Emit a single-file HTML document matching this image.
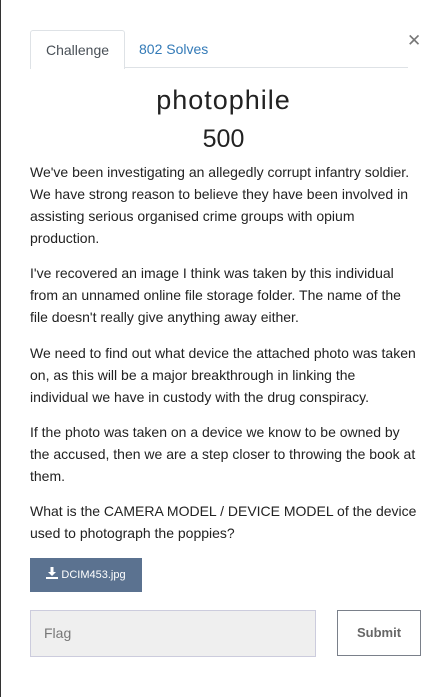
<!DOCTYPE html>
<html><head><style>
body{margin:0;width:447px;height:697px;background:#fff;position:relative;overflow:hidden;font-family:"Liberation Sans",sans-serif;color:#222}
.edge{position:absolute;left:0;top:0;width:1px;height:697px;background:#333}
.tab{position:absolute;left:30px;top:30px;width:93px;height:38px;border:1px solid #dee2e6;border-bottom:none;border-radius:3px 3px 0 0;background:#fff;font-size:14px;color:#495057;text-align:center;line-height:38px}
.line{position:absolute;left:30px;top:67px;width:378px;height:1px;background:#dee2e6}
.solves{position:absolute;left:139px;top:30px;line-height:38px;font-size:14px;color:#337ab7}
.x{position:absolute;left:407px;top:31px;font-size:17px;color:#777}
h1{position:absolute;top:85px;left:0;width:447px;text-align:center;margin:0;font-weight:normal;font-size:27px;letter-spacing:1px;color:#222}
h2{position:absolute;top:125px;left:0;width:447px;text-align:center;margin:0;font-weight:normal;font-size:25px}
p{position:absolute;left:30px;margin:0;font-size:14px;line-height:22px;color:#222;white-space:nowrap}
.btn{position:absolute;left:30px;top:558px;width:112px;height:34px;background:#5b7290;color:#fff;font-size:11px;line-height:34px;text-align:center}
.flag{position:absolute;left:30px;top:610px;background:#efefef;border:1px solid #ccd;color:#777;font-size:14px;line-height:45px;padding-left:13px;box-sizing:border-box;width:286px;height:47px}
.sub{position:absolute;left:337px;top:610px;width:84px;height:46px;border:1px solid #7a808a;box-sizing:border-box;font-size:13px;font-weight:bold;color:#666;text-align:center;line-height:44px}
</style></head><body>
<div class="edge"></div>
<div class="line"></div>
<div class="tab">Challenge</div>
<div class="solves">802 Solves</div>
<div class="x">✕</div>
<h1>photophile</h1>
<h2>500</h2>
<p style="top:161px">We've been investigating an allegedly corrupt infantry soldier.<br>We have strong reason to believe they have been involved in<br>assisting serious organised crime groups with opium<br>production.</p>
<p style="top:262px">I've recovered an image I think was taken by this individual<br>from an unnamed online file storage folder. The name of the<br>file doesn't really give anything away either.</p>
<p style="top:342px">We need to find out what device the attached photo was taken<br>on, as this will be a major breakthrough in linking the<br>individual we have in custody with the drug conspiracy.</p>
<p style="top:421px">If the photo was taken on a device we know to be owned by<br>the accused, then we are a step closer to throwing the book at<br>them.</p>
<p style="top:500px">What is the CAMERA MODEL / DEVICE MODEL of the device<br>used to photograph the poppies?</p>
<div class="btn"><svg width="12" height="12" viewBox="0 0 12 12" style="vertical-align:-1px"><path d="M4.5 0h3v5h2.5l-4 4-4-4h2.5z" fill="#fff"/><rect x="0" y="10" width="12" height="2" fill="#fff"/></svg> DCIM453.jpg</div>
<div class="flag">Flag</div>
<div class="sub">Submit</div>
</body></html>
